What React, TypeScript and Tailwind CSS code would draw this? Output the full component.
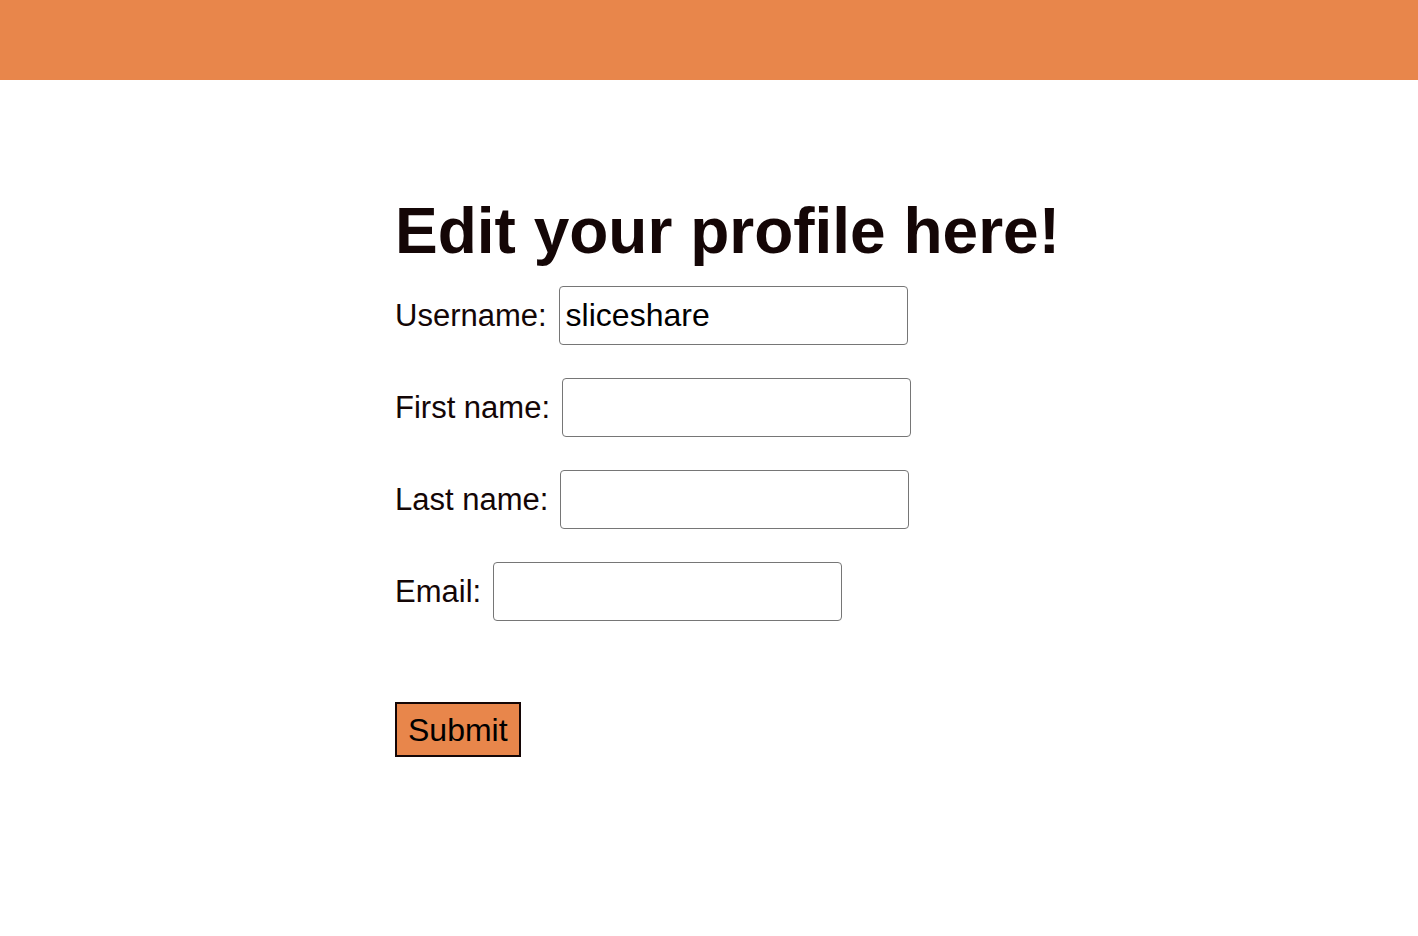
import React from 'react'

const fields = [
    { label: 'Username:', value: 'sliceshare' },
    { label: 'First name:', value: '' },
    { label: 'Last name:', value: '' },
    { label: 'Email:', value: '' },
]

function App()
{
    return (
        <div className="min-h-screen bg-white font-['Liberation_Sans',Arial,sans-serif] text-[#140606]">

            <header className="h-[80px] w-full bg-[#e8864b]" />

            <main className="pl-[395px] pt-[119px]">
                <h1 className="text-[64px] font-bold leading-none">
                    Edit your profile here!
                </h1>

                <form className="mt-[23px] flex flex-col" onSubmit={e => e.preventDefault()}>
                    <div className="flex flex-col gap-[33px]">
                        {fields.map(field => (
                            <div key={field.label} className="flex h-[59px] items-center gap-[12px]">
                                <label className="text-[31px] leading-none">{field.label}</label>
                                <input type="text"
                                       defaultValue={field.value}
                                       className="h-[59px] w-[349px] rounded-[4px] border border-[#767676] px-[6px] text-[32px] text-black outline-none"/>
                            </div>
                        ))}
                    </div>

                    <div className="mt-[81px]">
                        <button type="submit"
                                className="h-[55px] border-2 border-[#140606] bg-[#e8864b] px-[11px] text-[32px] leading-none text-black">
                            Submit
                        </button>
                    </div>
                </form>
            </main>
        </div>
    )
}

export default App
